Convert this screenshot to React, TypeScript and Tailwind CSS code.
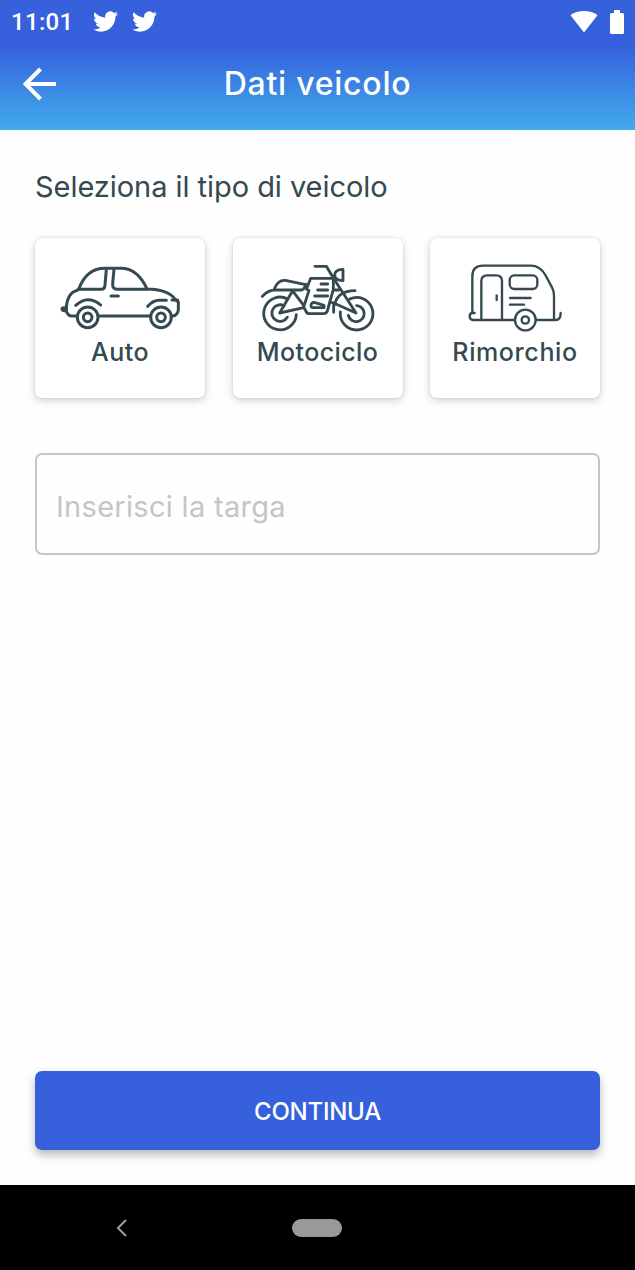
import { useState } from "react";
import type { ReactNode } from "react";

type VehicleType = "auto" | "motociclo" | "rimorchio";

type VehicleOption = {
  type: VehicleType;
  label: string;
  labelClass: string;
  icon: ReactNode;
};

function TwitterIcon() {
  return (
    <svg className="h-[25px] w-[25px]" viewBox="0 0 24 24" fill="currentColor">
      <path d="M23.95 4.57a10 10 0 0 1-2.82.77 4.96 4.96 0 0 0 2.16-2.72c-.95.55-2 .95-3.13 1.18a4.92 4.92 0 0 0-8.38 4.48C7.69 8.1 4.07 6.13 1.64 3.16a4.92 4.92 0 0 0 1.52 6.57 4.9 4.9 0 0 1-2.23-.61v.06c0 2.38 1.7 4.37 3.95 4.82a5 5 0 0 1-2.21.09 4.94 4.94 0 0 0 4.6 3.42A9.87 9.87 0 0 1 0 19.54a13.99 13.99 0 0 0 7.55 2.21c9.05 0 14-7.5 14-13.98 0-.21 0-.42-.02-.63a9.94 9.94 0 0 0 2.46-2.55z" />
    </svg>
  );
}

function CarIcon() {
  return (
    <svg
      className="h-[72px] w-[128px]"
      viewBox="93 96 384 216"
      fill="none"
      stroke="currentColor"
      strokeWidth="9"
      strokeLinecap="round"
      strokeLinejoin="round"
    >
      <path d="M155 258H140Q130 258 124 244V233Q127 190 154 182L161 178C178 132 205 115 240 115H288C325 115 349 140 366 177C407 177 440 189 451 209L460 216V240Q457 257 443 258" />
      <path d="M221 258H374M161 178H229Q239 178 240 166L244 118M267 118L263 161Q262 178 276 178H366" />
      <path d="M124 233H116Q111 233 111 237T117 242H124M258 198H280M441 210H458" />
      <path d="M152 226Q172 209 188 209Q210 209 227 225M368 229Q385 211 402 211H424" />
      <circle cx="188" cy="262" r="31" />
      <circle cx="188" cy="262" r="13" />
      <circle cx="408" cy="262" r="31" />
      <circle cx="408" cy="262" r="13" />
    </svg>
  );
}

function MotorcycleIcon() {
  return (
    <svg
      className="h-[72px] w-[128px]"
      viewBox="87 96 384 216"
      fill="none"
      stroke="currentColor"
      strokeWidth="8.5"
      strokeLinecap="round"
      strokeLinejoin="round"
    >
      {/* ruote */}
      <path d="M188 207A49 49 0 1 0 214 254M177 227A25 25 0 1 0 187 262" />
      <path d="M374 207Q385 202 395 202A49 49 0 1 1 346 246M395 227A24 24 0 1 1 370 256" />
      {/* sella e telaio */}
      <path d="M112 199Q129 180 151 180H230Q237 179 243 163M148 177C155 157 166 150 181 151L242 164" />
      <path d="M202 184L164 249L236 233M204 184L236 226" />
      {/* serbatoio e motore */}
      <path d="M247 178H244L257 145H325V178L307 243Q304 251 296 251H254Q246 251 243 244L236 231L252 181" />
      <path d="M288 162H308M278 180H308M269 198H308M268 217L297 226V233H264Q257 233 258 225Q260 216 268 217Z" />
      {/* manubrio, faro e forcella */}
      <path d="M270 109H304L327 147L393 249L326 219L315 216M326 219V247M326 180H342M330 223C334 199 350 183 390 182M354 118V152Q329 151 329 135T354 118Z" />
    </svg>
  );
}

function TrailerIcon() {
  return (
    <svg
      className="h-[72px] w-[128px]"
      viewBox="93 96 384 216"
      fill="none"
      stroke="currentColor"
      strokeWidth="7"
      strokeLinecap="round"
      strokeLinejoin="round"
    >
      <path d="M157 249V139Q157 107 189 107H332Q360 107 376 135L396 172Q402 183 402 198V270" />
      <path d="M164 249H156Q149 250 149 259T158 270H284M348 270H407Q422 270 422 249" />
      <path d="M184 270V153Q184 136 202 136H229Q246 136 246 153V270M230 196V210" />
      <rect x="269" y="136" width="83" height="41" rx="14" />
      <path d="M270 204H332M270 224H312" />
      <circle cx="316" cy="270" r="31" />
      <circle cx="316" cy="270" r="11" />
    </svg>
  );
}

const vehicleOptions: VehicleOption[] = [
  { type: "auto", label: "Auto", labelClass: "tracking-[0.5px]", icon: <CarIcon /> },
  { type: "motociclo", label: "Motociclo", labelClass: "tracking-[0.4px]", icon: <MotorcycleIcon /> },
  { type: "rimorchio", label: "Rimorchio", labelClass: "tracking-[0.6px]", icon: <TrailerIcon /> },
];

function StatusBar() {
  return (
    <div className="flex h-[43px] items-center justify-between pl-[11px] pr-[11px]">
      <div className="flex items-center">
        <span className="w-[82px] font-[Roboto,sans-serif] text-2xl font-medium tracking-[0.3px]">
          11:01
        </span>
        <div className="flex gap-[14px]">
          <TwitterIcon />
          <TwitterIcon />
        </div>
      </div>
      <div className="flex items-center gap-3">
        <svg className="h-[22px] w-[28px]" viewBox="0 0 28 22" fill="currentColor">
          <path d="M.5 4.2Q6 0 14 0t13.5 4.2L14 21.5Z" />
        </svg>
        <svg className="h-6 w-[14px]" viewBox="0 0 14 24" fill="currentColor">
          <path d="M4 0h6v3h2.5Q14 3 14 4.5v18Q14 24 12.5 24h-11Q0 24 0 22.5v-18Q0 3 1.5 3H4Z" />
        </svg>
      </div>
    </div>
  );
}

export default function App() {
  const [selected, setSelected] = useState<VehicleType | null>(null);
  const [plate, setPlate] = useState("");

  return (
    <div className="flex h-[1270px] w-[635px] flex-col bg-[#fefefe] font-[Inter,sans-serif] text-[#344a50]">
      <header className="h-[130px] bg-linear-to-b from-[#3660dc] from-35% to-[#43aaeb] text-white">
        <StatusBar />
        <div className="grid h-[82px] grid-cols-[60px_1fr_60px] items-center">
          <button className="pl-[22px]" aria-label="Indietro">
            <svg
              className="h-[34px] w-[35px]"
              viewBox="0 0 35 34"
              fill="none"
              stroke="currentColor"
              strokeWidth="4"
            >
              <path d="M34 17H4M18.5 2L3.5 17l15 15" />
            </svg>
          </button>
          <h1 className="text-center text-[32px] font-medium tracking-[0.75px]">Dati veicolo</h1>
        </div>
      </header>

      <main className="flex flex-1 flex-col px-[35px] pt-[35px]">
        <h2 className="h-[73px] text-[29px] leading-[44px] tracking-[-0.05px]">
          Seleziona il tipo di veicolo
        </h2>

        <div className="flex justify-between">
          {vehicleOptions.map((option) => (
            <button
              key={option.type}
              aria-pressed={selected === option.type}
              className="flex h-[160px] w-[170px] flex-col items-center rounded-[7px] bg-white pt-6 shadow-[0_3px_9px_rgba(0,0,0,0.16),0_0_3px_rgba(0,0,0,0.12)]"
              onClick={() => setSelected(option.type)}
            >
              {option.icon}
              <span className={`text-[25px] leading-9 font-medium ${option.labelClass}`}>
                {option.label}
              </span>
            </button>
          ))}
        </div>

        <input
          className="mt-[55px] h-[102px] w-full rounded-[7px] border-2 border-[#c6c6c6] px-[19px] pt-1 text-[29px] tracking-[0.3px] outline-none placeholder:text-[#c5c5c5]"
          type="text"
          value={plate}
          placeholder="Inserisci la targa"
          onChange={(event) => setPlate(event.target.value)}
        />

        <button className="mt-auto mb-[35px] h-[79px] shrink-0 rounded-[7px] bg-[#3660dc] pt-0.5 text-2xl font-medium tracking-[-0.25px] text-white shadow-[0_5px_10px_rgba(0,0,0,0.28)]">
          CONTINUA
        </button>
      </main>

      <nav className="grid h-[85px] grid-cols-3 items-center bg-black text-[#999]">
        <svg
          className="ml-[115px] h-[18px] w-3"
          viewBox="0 0 12 18"
          fill="none"
          stroke="currentColor"
          strokeWidth="2.2"
        >
          <path d="M11 1L3 9l8 8" />
        </svg>
        <span className="h-[18px] w-[50px] justify-self-center rounded-full bg-[#999]" />
      </nav>
    </div>
  );
}
